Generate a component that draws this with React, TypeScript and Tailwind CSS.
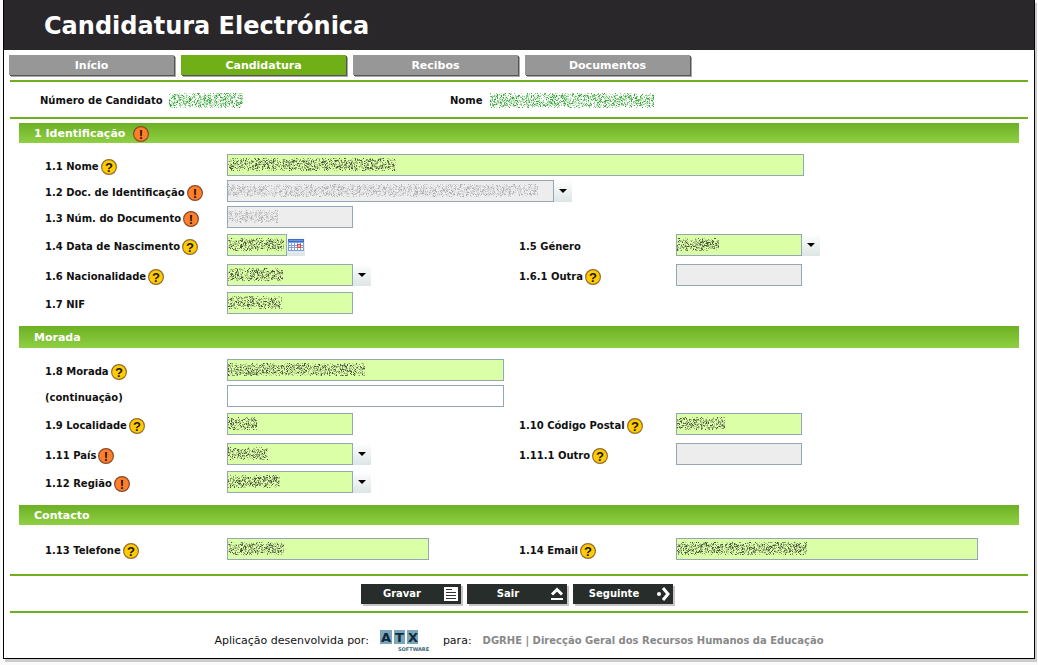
import React from 'react'

type Tone = 'green' | 'dark' | 'muted';

interface ScribbleProps {
  width: number;
  seed: number;
  tone?: Tone;
}

interface FieldProps {
  id: string;
  label: string;
  mark?: 'help' | 'required';
  children: React.ReactNode;
  wide?: boolean;
}

interface BoxProps {
  id: string;
  size: string;
  masked?: number;
  state?: 'filled' | 'disabled' | 'empty';
}

const TONES: Record<Tone, string[]> = {
  green: ['#c3e6c3', '#7cc87c', '#3aa53a'],
  dark: ['#b4cf8c', '#849668', '#4d573d'],
  muted: ['#dcdcdc', '#cacaca', '#b0b0b0'],
};

const STATES = {
  filled: 'bg-[#dbffa6]',
  disabled: 'bg-[#ededed]',
  empty: 'bg-white',
};

const TABS = ['Início', 'Candidatura', 'Recibos', 'Documentos'];

// Masked personal data, drawn as three layers of scattered dots
function Scribble({ width, seed, tone = 'dark' }: ScribbleProps) {
  const height = tone === 'green' ? 15 : 13;
  const layers = ['', '', ''];
  let state = seed * 7919 + 17;
  const next = () => {
    state = (state * 1103515245 + 12345) % 2147483648;
    return state / 2147483648;
  };

  for (let x = 0; x < width; x++) {
    for (let y = 0; y < height; y++) {
      const weight = 0.62 + 0.25 * Math.sin(x * 0.9 + y * 0.4 + seed) * Math.cos(x * 0.31 - y * 0.5);
      const edge = y < 2 || y > height - 3 ? 0.5 : 1;
      if (next() < weight * edge) {
        const pick = next();
        const layer = pick < 0.45 ? 0 : pick < 0.8 ? 1 : 2;
        layers[layer] += `M${x} ${y}h1v1h-1z`;
      }
    }
  }

  return (
    <svg width={width} height={height} shapeRendering="crispEdges" aria-hidden="true">
      {layers.map((d, index) => (
        <path key={index} d={d} fill={TONES[tone][index]} />
      ))}
    </svg>
  )
}

function Mark({ kind }: { kind: 'help' | 'required' }) {
  const help = kind === 'help';
  return (
    <svg width="16" height="16" viewBox="0 0 16 16" className="shrink-0" role="img" aria-label={help ? 'Ajuda' : 'Obrigatório'}>
      <circle cx="8" cy="8" r="7.4" fill={help ? '#ffcc00' : '#ff7f2a'} stroke={help ? '#966b2e' : '#8a4a2c'} strokeWidth="1.2" />
      <text x="8" y="12.6" textAnchor="middle" fontSize="13" fontWeight="bold" fontFamily="Liberation Sans, sans-serif" fill="#1c1408">
        {help ? '?' : '!'}
      </text>
    </svg>
  )
}

function Field({ id, label, mark, children, wide }: FieldProps) {
  return (
    <>
      <div className="flex items-center gap-0.5 pt-[3px]">
        <label htmlFor={id} className="whitespace-nowrap">{label}</label>
        {mark && <Mark kind={mark} />}
      </div>
      <div className={wide ? 'col-span-3 flex' : 'flex'}>{children}</div>
    </>
  )
}

function Masked({ width, tone }: { width: number; tone: Tone }) {
  return (
    <span className="absolute left-px top-1 pointer-events-none">
      <Scribble width={width} seed={width} tone={tone} />
    </span>
  )
}

function TextBox({ id, size, masked, state = 'filled' }: BoxProps) {
  return (
    <span className={`relative block ${size}`}>
      <input
        id={id}
        type="text"
        disabled={state === 'disabled'}
        className={`block w-full h-5.5 px-1 border border-[#93a7b5] ${STATES[state]}`}
      />
      {masked && <Masked width={masked} tone={state === 'disabled' ? 'muted' : 'dark'} />}
    </span>
  )
}

function DropDown({ id, size, masked, state = 'filled' }: BoxProps) {
  return (
    <>
      <span className={`relative block ${size}`}>
        <select
          id={id}
          disabled={state === 'disabled'}
          className={`block w-full h-5.5 px-1 appearance-none opacity-100 border border-[#93a7b5] ${STATES[state]}`}
        >
          <option></option>
        </select>
        {masked && <Masked width={masked} tone={state === 'disabled' ? 'muted' : 'dark'} />}
      </span>
      <span className="w-4.5 h-5.5 shrink-0 flex items-center justify-center bg-linear-to-b from-white to-[#dde5e5]">
        <svg width="8" height="4" viewBox="0 0 8 4" aria-hidden="true">
          <path d="M0 0h8L4 4z" fill="#000" />
        </svg>
      </span>
    </>
  )
}

function CalendarButton() {
  return (
    <button type="button" aria-label="Escolher data" className="w-4.5 h-5.5 flex items-center justify-center bg-linear-to-b from-white to-[#dde5e5]">
      <svg width="16" height="12" viewBox="0 0 16 12" shapeRendering="crispEdges" aria-hidden="true">
        <path d="M0 0h16v12H0z" fill="#7f9fdc" />
        <path d="M0 0h16v3H0z" fill="#3f6cc0" />
        <path d="M1 1h14v1H1z" fill="#6f97e0" />
        <path d="M1 4h2v2H1zM4 4h2v2H4zM7 4h2v2H7zM10 4h2v2h-2zM13 4h2v2h-2zM1 7h2v1H1zM4 7h2v1H4zM7 7h2v1H7zM13 7h2v1h-2zM1 9h2v2H1zM4 9h2v2H4zM7 9h2v2H7zM10 9h2v2h-2zM13 9h2v2h-2z" fill="#fff" />
        <path d="M9 5h4v4H9z" fill="#e8492f" />
        <path d="M10 6h2v2h-2z" fill="#ffb9a6" />
      </svg>
    </button>
  )
}

function SectionTitle({ children, size = 'h-5' }: { children: React.ReactNode; size?: string }) {
  return (
    <h2 className={`flex items-center gap-2 pl-[15px] pt-0.5 text-[11px] text-white bg-linear-to-b from-[#6cb023] to-[#90d043] ${size}`}>
      {children}
    </h2>
  )
}

function Row({ children, gap = '' }: { children: React.ReactNode; gap?: string }) {
  return (
    <div className={`grid grid-cols-[182px_292fr_157px_343fr] pl-[26px] ${gap}`}>{children}</div>
  )
}

function ActionButton({ label, children }: { label: string; children: React.ReactNode }) {
  return (
    <button type="button" className="flex items-center w-25 h-5 pr-0.5 bg-[#262d2a] text-white font-bold shadow-[2px_2px_0_#c8c5c5]">
      <span className="flex-1 text-center">{label}</span>
      <svg width="16" height="16" viewBox="0 0 16 16" aria-hidden="true">{children}</svg>
    </button>
  )
}

function App() {
  return (
    <div className="px-[3px] pb-1.5 bg-[#fafafa] text-[10px] leading-4 text-[#111] font-['Verdana','DejaVu_Sans',sans-serif]">
      <div className="bg-white border-x border-b border-black shadow-[2px_3px_0_#cccccc]">
        <header className="flex items-center h-[50px] pl-10 pt-0.5 bg-[#29272a]">
          <h1 className="text-2xl font-bold text-white">Candidatura Electrónica</h1>
        </header>

        <nav className="flex gap-[7px] px-[5px] pt-[5px]">
          {TABS.map((tab) => (
            <a
              key={tab}
              href="#"
              className={`flex items-center justify-center w-[165px] h-5 pt-0.5 text-[11px] font-bold text-white shadow-[1px_1px_0_#555555,2px_2px_0_#a8a8a8] ${tab === 'Candidatura' ? 'bg-[#70b016]' : 'bg-[#979797]'}`}
            >
              {tab}
            </a>
          ))}
        </nav>

        <main className="mx-1.5 mt-[5px]">
          <div className="flex items-center h-[39px] pl-[30px] pt-0.5 border-y-2 border-[#70b020] font-bold">
            <div className="flex items-center gap-1.5 w-[410px]">
              <span>Número de Candidato</span>
              <Scribble width={74} seed={3} tone="green" />
            </div>
            <div className="flex items-center gap-2">
              <span>Nome</span>
              <Scribble width={164} seed={8} tone="green" />
            </div>
          </div>

          <form className="ml-[9px] mr-[9px] mt-1 font-bold">
            <SectionTitle>1 Identificação<Mark kind="required" /></SectionTitle>
            <div className="pt-[11px] pb-3">
              <Row>
                <Field id="nome" label="1.1 Nome" mark="help" wide>
                  <TextBox id="nome" size="w-[577px]" masked={168} />
                </Field>
              </Row>
              <Row gap="mt-1">
                <Field id="doc" label="1.2 Doc. de Identificação" mark="required" wide>
                  <DropDown id="doc" size="w-[327px]" masked={310} state="disabled" />
                </Field>
              </Row>
              <Row gap="mt-1">
                <Field id="num" label="1.3 Núm. do Documento" mark="required">
                  <TextBox id="num" size="w-[126px]" masked={50} state="disabled" />
                </Field>
              </Row>
              <Row gap="mt-1.5">
                <Field id="data" label="1.4 Data de Nascimento" mark="help">
                  <TextBox id="data" size="w-[60px]" masked={56} />
                  <CalendarButton />
                </Field>
                <Field id="genero" label="1.5 Género">
                  <DropDown id="genero" size="w-[126px]" masked={42} />
                </Field>
              </Row>
              <Row gap="mt-2">
                <Field id="nacionalidade" label="1.6 Nacionalidade" mark="help">
                  <DropDown id="nacionalidade" size="w-[126px]" masked={55} />
                </Field>
                <Field id="outra" label="1.6.1 Outra" mark="help">
                  <TextBox id="outra" size="w-[126px]" state="disabled" />
                </Field>
              </Row>
              <Row gap="mt-1.5">
                <Field id="nif" label="1.7 NIF">
                  <TextBox id="nif" size="w-[126px]" masked={54} />
                </Field>
              </Row>
            </div>

            <SectionTitle size="h-5.5">Morada</SectionTitle>
            <div className="pt-[11px] pb-3">
              <Row>
                <Field id="morada" label="1.8 Morada" mark="help" wide>
                  <TextBox id="morada" size="w-[277px]" masked={137} />
                </Field>
              </Row>
              <Row gap="mt-1">
                <Field id="morada2" label="(continuação)" wide>
                  <TextBox id="morada2" size="w-[277px]" state="empty" />
                </Field>
              </Row>
              <Row gap="mt-1.5">
                <Field id="localidade" label="1.9 Localidade" mark="help">
                  <TextBox id="localidade" size="w-[126px]" masked={29} />
                </Field>
                <Field id="postal" label="1.10 Código Postal" mark="help">
                  <TextBox id="postal" size="w-[126px]" masked={48} />
                </Field>
              </Row>
              <Row gap="mt-2">
                <Field id="pais" label="1.11 País" mark="required">
                  <DropDown id="pais" size="w-[126px]" masked={40} />
                </Field>
                <Field id="outro" label="1.11.1 Outro" mark="help">
                  <TextBox id="outro" size="w-[126px]" state="disabled" />
                </Field>
              </Row>
              <Row gap="mt-1.5">
                <Field id="regiao" label="1.12 Região" mark="required">
                  <DropDown id="regiao" size="w-[126px]" masked={52} />
                </Field>
              </Row>
            </div>

            <SectionTitle>Contacto</SectionTitle>
            <div className="pt-[13px] pb-3.5">
              <Row>
                <Field id="telefone" label="1.13 Telefone" mark="help">
                  <TextBox id="telefone" size="w-[202px]" masked={56} />
                </Field>
                <Field id="email" label="1.14 Email" mark="help">
                  <TextBox id="email" size="w-[302px]" masked={130} />
                </Field>
              </Row>
            </div>
          </form>

          <div className="flex items-center justify-center gap-1.5 h-[39px] pt-px pr-1 border-y-2 border-[#70b020]">
            <ActionButton label="Gravar">
              <path d="M1 1h14v14H1z" fill="#fff" />
              <path d="M3 3.5h6M3 6.5h10M3 9.5h10M3 12.5h10" stroke="#333" />
            </ActionButton>
            <ActionButton label="Sair">
              <path d="M3 8.5L8 3.5l5 5" fill="none" stroke="#fff" strokeWidth="3" />
              <path d="M2 12h12v2H2z" fill="#fff" />
            </ActionButton>
            <ActionButton label="Seguinte">
              <circle cx="4" cy="8" r="2" fill="#fff" />
              <path d="M8 2l5 6-5 6" fill="none" stroke="#fff" strokeWidth="3" />
            </ActionButton>
          </div>
        </main>

        <footer className="flex items-center justify-center gap-[11px] h-[45px] pt-2.5 text-[11px]">
          <span>Aplicação desenvolvida por:</span>
          <svg width="52" height="22" viewBox="0 0 52 22" role="img" aria-label="ATX Software">
            <path d="M0 0h12v14H0zM14 0h11v14H14zM27 0h11v14H27z" fill="#7ba6ba" />
            <g fontSize="13" fontWeight="bold" fontFamily="DejaVu Sans, sans-serif" fill="#10293a">
              <text x="1" y="12">A</text>
              <text x="15" y="12">T</text>
              <text x="28" y="12">X</text>
            </g>
            <text x="18" y="21" fontSize="5" fontWeight="bold" fontFamily="DejaVu Sans, sans-serif" fill="#3b6478">SOFTWARE</text>
          </svg>
          <span>para:</span>
          <span className="text-[10px] font-bold text-[#888888]">DGRHE | Direcção Geral dos Recursos Humanos da Educação</span>
        </footer>
      </div>
    </div>
  )
}

export default App;
